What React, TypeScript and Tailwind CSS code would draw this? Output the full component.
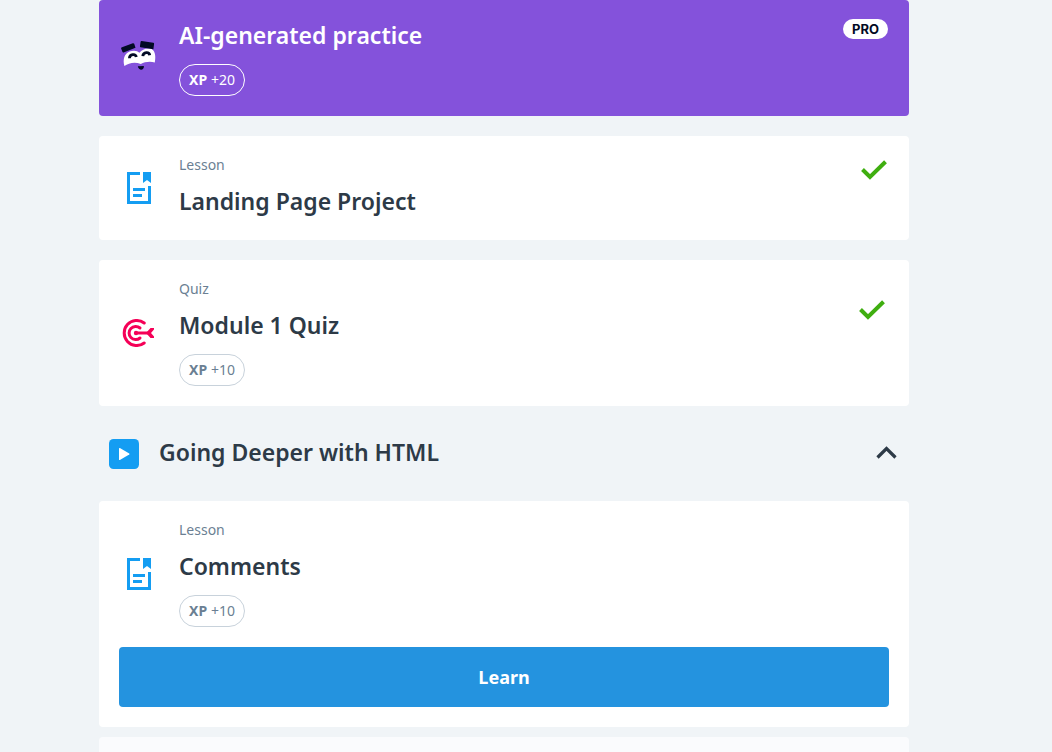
import type { ReactNode } from "react";

function FaceIcon() {
  return (
    <svg viewBox="0 0 40 38" className="h-[38px] w-10" aria-hidden="true">
      <path d="M5.4 28C3.6 21.5 5.4 15.6 10.6 13.6C14.8 12 18.4 12.8 20.4 14.8C22.8 11.8 27 9.8 31 10.6C35.6 11.6 37.3 17 35.8 24.4C31 23 25.6 23.8 21.8 26C15.8 23.6 9.6 25 5.4 28Z" fill="#fff" />
      <path d="M3 9.2L13.8 5.2Q14.8 4.9 15.2 5.8L16.5 9.8L4.6 14.4Q3.8 14.7 3.4 13.8L2.1 10.5Q1.8 9.6 3 9.2Z" fill="#020a24" />
      <path d="M22.6 3L34.3 4.7Q35.2 4.9 35.1 5.8L34.4 11.2L21.4 9.2Q20.8 9.1 21 8.1L21.6 3.8Q21.8 2.9 22.6 3Z" fill="#020a24" />
      <path d="M10.4 20.2C10.6 15.8 16.6 15.4 17.3 19M23.8 18.2C24.2 13.8 30.2 13.6 30.7 17.2" fill="none" stroke="#020a24" strokeWidth="2.8" />
      <path d="M18.8 28.3L24.9 27.9C25.2 32.8 19.6 32.9 18.8 28.3Z" fill="#020a24" />
    </svg>
  );
}

function LessonIcon() {
  return (
    <svg viewBox="0 0 24 32" className="h-8 w-6" aria-hidden="true">
      <path d="M13 1.5H1.5V30.5H22.5V14" fill="none" stroke="#149df2" strokeWidth="3" />
      <path d="M16 0H24V11L20 8L16 11Z" fill="#149df2" />
      <path d="M6 17.5H18M6 23.5H15" stroke="#149df2" strokeWidth="3" />
    </svg>
  );
}

function QuizIcon() {
  return (
    <svg viewBox="0 0 34 28" className="h-7 w-[34px]" aria-hidden="true">
      <g fill="none" stroke="#f50057" strokeWidth="3">
        <path d="M22.2 4A12.5 12.5 0 1 0 22.2 24" strokeLinecap="round" />
        <path d="M18 9A6.6 6.6 0 1 0 18 19" strokeLinecap="round" />
        <path d="M14 14H27" />
      </g>
      <circle cx="14" cy="14" r="2.2" fill="#f50057" />
      <path d="M24 14L28.5 9H32V10.5L29 14L32 17.5V19H28.5Z" fill="#f50057" />
    </svg>
  );
}

function CheckIcon() {
  return (
    <svg viewBox="0 0 26 20" className="h-5 w-[26px]" role="img" aria-label="Completed">
      <path d="M1.5 9.5L9 17L24.5 1.8" fill="none" stroke="#3fae10" strokeWidth="4" />
    </svg>
  );
}

function XpBadge({ points, light = false }: { points: number; light?: boolean }) {
  return (
    <div
      className={`mt-2.5 flex h-8 w-fit items-center gap-1 rounded-full border px-[9px] text-sm ${
        light ? "border-white text-white" : "border-[#c8d2db] text-[#6b7f93]"
      }`}
    >
      <span className="font-bold">XP</span>
      <span>+{points}</span>
    </div>
  );
}

const titleText = "text-[23px]/[34px] font-semibold";

type ItemProps = {
  kind: string;
  title: string;
  icon: ReactNode;
  points?: number;
  status?: ReactNode;
  action?: ReactNode;
};

function Item({ kind, title, icon, points, status, action }: ItemProps) {
  return (
    <article className="rounded bg-white p-5">
      <div className="flex items-start gap-5">
        <div className="flex w-10 shrink-0 items-center justify-center self-stretch">{icon}</div>
        <div className="min-w-0 grow">
          <p className="text-sm/[18px] text-[#6b7f93]">{kind}</p>
          <h3 className={`mt-2.5 pb-0.5 ${titleText}`}>{title}</h3>
          {points !== undefined && <XpBadge points={points} />}
        </div>
        {status}
      </div>
      {action}
    </article>
  );
}

export default function App() {
  return (
    <main className="h-screen overflow-hidden bg-[#f0f4f7] pr-11 font-['Noto_Sans','Open_Sans',sans-serif] text-[#2d3a47]">
      <div className="mx-auto max-w-[810px]">
        <article className="flex items-start gap-5 rounded bg-[#8452db] px-5 pt-[18px] pb-5 text-white">
          <div className="flex w-10 shrink-0 items-center justify-center self-stretch">
            <FaceIcon />
          </div>
          <div className="min-w-0 grow">
            <h3 className={`pb-0.5 ${titleText}`}>AI-generated practice</h3>
            <XpBadge points={20} light />
          </div>
          <span className="mt-px mr-px rounded-full bg-white px-[9px] font-['Inter',sans-serif] text-[13px]/5 font-bold text-[#020a24]">
            PRO
          </span>
        </article>

        <div className="mt-5 flex flex-col gap-5">
          <Item
            kind="Lesson"
            title="Landing Page Project"
            icon={<LessonIcon />}
            status={<div className="pt-1 pr-0.5"><CheckIcon /></div>}
          />
          <Item
            kind="Quiz"
            title="Module 1 Quiz"
            icon={<QuizIcon />}
            points={10}
            status={<div className="pt-5 pr-1"><CheckIcon /></div>}
          />
        </div>

        <section>
          <h2>
            <button type="button" aria-expanded="true" className="flex h-[95px] w-full items-center gap-5 px-2.5 text-left">
              <svg viewBox="0 0 30 30" className="size-[30px]" aria-hidden="true">
                <rect width="30" height="30" rx="4.5" fill="#149df2" />
                <path d="M10 9.5Q10 8.6 10.9 9L20.2 14.4Q21 15 20.2 15.6L10.9 21Q10 21.4 10 20.5Z" fill="#fff" />
              </svg>
              <span className={`grow pb-1 ${titleText}`}>Going Deeper with HTML</span>
              <svg viewBox="0 0 24 16" className="h-4 w-6" aria-hidden="true">
                <path d="M2.5 11.5L11.5 2.5L20.5 11.5" fill="none" stroke="#2d3a47" strokeWidth="3.2" />
              </svg>
            </button>
          </h2>
          <div className="flex flex-col gap-2.5">
            <Item
              kind="Lesson"
              title="Comments"
              icon={<LessonIcon />}
              points={10}
              action={
                <button type="button" className="mt-5 h-[60px] w-full rounded bg-[#2493df] text-lg font-bold text-white">
                  Learn
                </button>
              }
            />
            <div className="h-[146px] rounded bg-[#fafbfd]" />
          </div>
        </section>
      </div>
    </main>
  );
}
